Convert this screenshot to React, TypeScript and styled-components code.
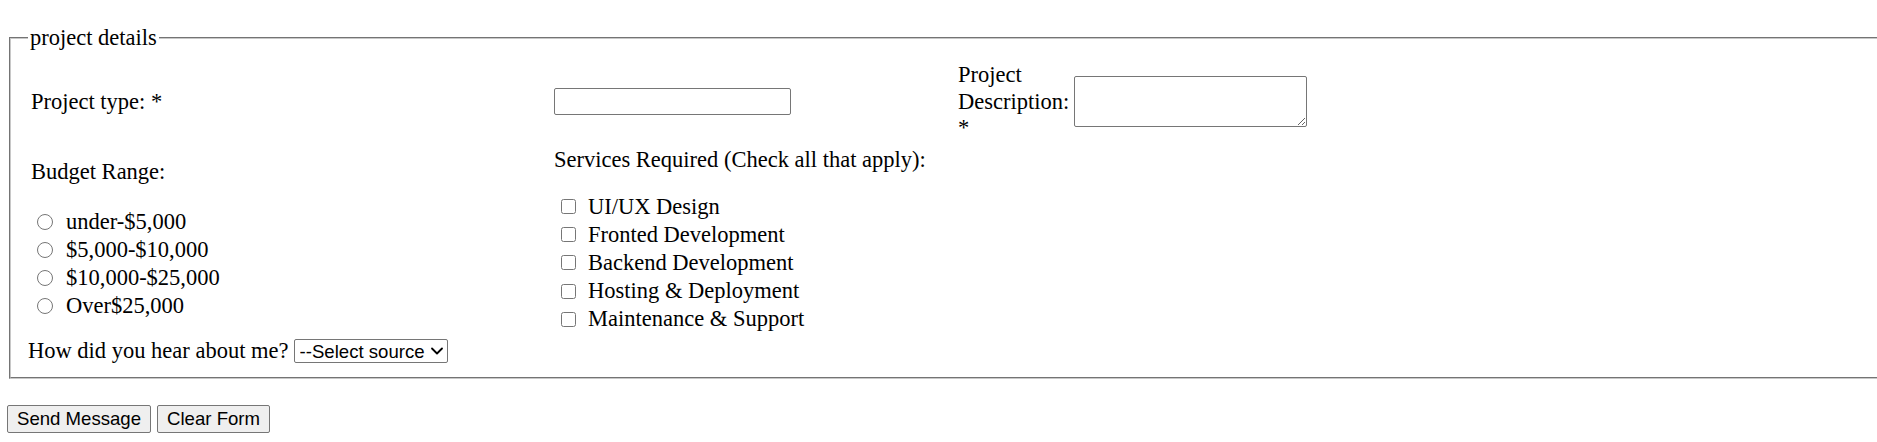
import React from "react";
import styled, { createGlobalStyle } from "styled-components";
import { ChevronDown } from "lucide-react";

const Global = createGlobalStyle`
  html, body { margin: 0; padding: 0; background: #fff; overflow: hidden; }
  body {
    font-family: "Liberation Serif", "Times New Roman", serif;
    font-size: 22.5px;
    color: #000;
  }
`;

const Page = styled.div`
  padding: 25px 0 0 7px;
  width: 1930px;
`;

const Fieldset = styled.fieldset`
  margin: 0 2px;
  padding: 12px 0 13px 17px;
  border: 2px groove rgb(200, 200, 200);
  min-width: 0;
`;

const Legend = styled.legend`
  padding: 0 2px;
  font-size: 22.5px;
  line-height: 25px;
`;

const Grid = styled.div`
  display: grid;
  grid-template-columns: 526px 404px 1fr;
  row-gap: 5px;
`;

const Label = styled.label<{ $indent?: number }>`
  display: block;
  padding-left: ${(p) => p.$indent ?? 0}px;
  line-height: 26px;
`;

const RowLabel = styled(Label)`
  align-self: center;
`;

const TextInput = styled.input`
  align-self: center;
  justify-self: start;
  box-sizing: border-box;
  width: 237px;
  height: 27px;
  margin: 0;
  border: 1px solid #767676;
  border-radius: 2px;
  font: 18.6px "Liberation Sans", Arial, sans-serif;
  padding: 1px 2px;
`;

const DescGroup = styled.div`
  display: flex;
  align-items: center;
  gap: 6px;
`;

const DescLabel = styled.label`
  width: 110px;
  line-height: 26.5px;
`;

const TextArea = styled.textarea`
  box-sizing: border-box;
  width: 233px;
  height: 51px;
  margin: 0;
  border: 1px solid #767676;
  border-radius: 2px;
  font: 18.6px "Liberation Mono", monospace;
`;

const Block = styled.div<{ $top: number }>`
  margin-top: ${(p) => p.$top}px;
`;

const OptionList = styled.div<{ $top: number; $left: number }>`
  margin-top: ${(p) => p.$top}px;
  padding-left: ${(p) => p.$left}px;
`;

const Option = styled.label<{ $gap: number }>`
  display: flex;
  align-items: center;
  gap: ${(p) => p.$gap}px;
  height: 28.2px;
  line-height: 26px;
`;

const Radio = styled.input.attrs({ type: "radio" })`
  width: 16px;
  height: 16px;
  margin: 0;
`;

const Check = styled.input.attrs({ type: "checkbox" })`
  width: 15px;
  height: 15px;
  margin: 0;
`;

const SourceRow = styled.div`
  grid-column: 1 / -1;
  display: flex;
  align-items: center;
  gap: 5px;
  line-height: 26px;
`;

const SelectWrap = styled.div`
  position: relative;
  display: flex;
  align-items: center;
`;

const Select = styled.select`
  appearance: none;
  box-sizing: border-box;
  width: 154px;
  height: 24px;
  margin: 0;
  border: 1px solid #767676;
  border-radius: 2px;
  background: #fff;
  color: #000;
  font: 18.6px "Liberation Sans", Arial, sans-serif;
  padding: 0 20px 0 5px;
`;

const Arrow = styled(ChevronDown)`
  position: absolute;
  right: 1px;
  top: 50%;
  transform: translateY(-50%);
  pointer-events: none;
  color: #000;
`;

const Actions = styled.div`
  display: flex;
  gap: 6px;
  margin-top: 26px;
`;

const Button = styled.button`
  box-sizing: border-box;
  height: 28px;
  margin: 0;
  padding: 0 9px;
  border: 1px solid #767676;
  border-radius: 2px;
  background: #efefef;
  color: #000;
  font: 18.6px "Liberation Sans", Arial, sans-serif;
`;

const budgets = ["under-$5,000", "$5,000-$10,000", "$10,000-$25,000", "Over$25,000"];
const services = [
  "UI/UX Design",
  "Fronted Development",
  "Backend Development",
  "Hosting & Deployment",
  "Maintenance & Support",
];

export default function App() {
  return (
    <>
      <Global />
      <Page>
        <form onSubmit={(e) => e.preventDefault()}>
          <Fieldset>
            <Legend>project details</Legend>
            <Grid>
              <RowLabel $indent={3} htmlFor="ptype">Project type: *</RowLabel>
              <TextInput id="ptype" type="text" />
              <DescGroup>
                <DescLabel htmlFor="pdesc">Project Description: *</DescLabel>
                <TextArea id="pdesc" />
              </DescGroup>

              <Block $top={12}>
                <Label $indent={3}>Budget Range:</Label>
                <OptionList $top={23} $left={9}>
                  {budgets.map((b) => (
                    <Option key={b} $gap={13}>
                      <Radio name="budget" value={b} />
                      {b}
                    </Option>
                  ))}
                </OptionList>
              </Block>
              <Block $top={0}>
                <Label>Services Required (Check all that apply):</Label>
                <OptionList $top={20} $left={7}>
                  {services.map((s) => (
                    <Option key={s} $gap={12}>
                      <Check value={s} />
                      {s}
                    </Option>
                  ))}
                </OptionList>
              </Block>
              <div />

              <SourceRow>
                <label htmlFor="source">How did you hear about me?</label>
                <SelectWrap>
                  <Select id="source" defaultValue="">
                    <option value="">--Select source</option>
                    <option value="google">Google</option>
                    <option value="social">Social Media</option>
                    <option value="referral">Referral</option>
                  </Select>
                  <Arrow size={20} strokeWidth={2.2} />
                </SelectWrap>
              </SourceRow>
            </Grid>
          </Fieldset>
          <Actions>
            <Button type="submit">Send Message</Button>
            <Button type="reset">Clear Form</Button>
          </Actions>
        </form>
      </Page>
    </>
  );
}
